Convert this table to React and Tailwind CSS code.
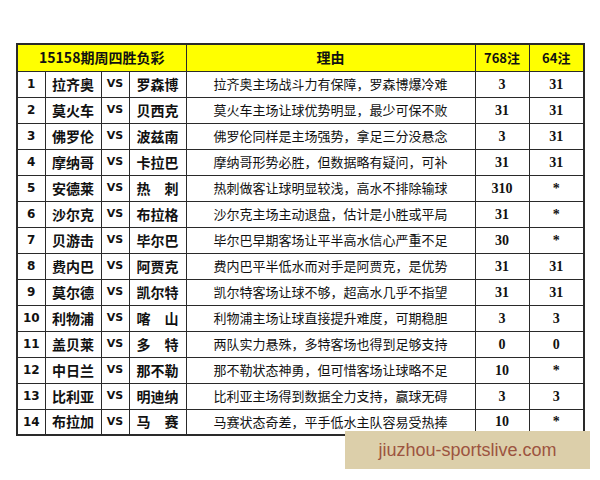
import React from 'react';

const rows = [
  ['1', '拉齐奥', '罗森博', '拉齐奥主场战斗力有保障，罗森博爆冷难', '3', '31'],
  ['2', '莫火车', '贝西克', '莫火车主场让球优势明显，最少可保不败', '31', '31'],
  ['3', '佛罗伦', '波兹南', '佛罗伦同样是主场强势，拿足三分没悬念', '3', '31'],
  ['4', '摩纳哥', '卡拉巴', '摩纳哥形势必胜，但数据略有疑问，可补', '31', '31'],
  ['5', '安德莱', '热　刺', '热刺做客让球明显较浅，高水不排除输球', '310', '*'],
  ['6', '沙尔克', '布拉格', '沙尔克主场主动退盘，估计是小胜或平局', '31', '*'],
  ['7', '贝游击', '毕尔巴', '毕尔巴早期客场让平半高水信心严重不足', '30', '*'],
  ['8', '费内巴', '阿贾克', '费内巴平半低水而对手是阿贾克，是优势', '31', '31'],
  ['9', '莫尔德', '凯尔特', '凯尔特客场让球不够，超高水几乎不指望', '31', '31'],
  ['10', '利物浦', '喀　山', '利物浦主场让球直接提升难度，可期稳胆', '3', '3'],
  ['11', '盖贝莱', '多　特', '两队实力悬殊，多特客场也得到足够支持', '0', '0'],
  ['12', '中日兰', '那不勒', '那不勒状态神勇，但可惜客场让球略不足', '10', '*'],
  ['13', '比利亚', '明迪纳', '比利亚主场得到数据全力支持，赢球无碍', '3', '3'],
  ['14', '布拉加', '马　赛', '马赛状态奇差，平手低水主队容易受热捧', '10', '*'],
];

const cell = 'border border-[#2a2a2a] text-center p-0';
const cjk = "font-['Noto_Sans_CJK_SC',sans-serif]";
const serif = "font-['Liberation_Serif','Noto_Sans_CJK_SC',serif]";
const dejavu = "font-['DejaVu_Sans',sans-serif]";

export default function App() {
  return (
    <div className="relative w-[600px] h-[480px] bg-white pt-[43px] pl-[16px]">
      <table className="border-collapse border-2 border-[#2a2a2a] text-[#111] table-fixed w-[567px]">
        <colgroup>
          <col className="w-[28px]" />
          <col className="w-[56px]" />
          <col className="w-[28px]" />
          <col className="w-[57px]" />
          <col className="w-[289px]" />
          <col className="w-[54px]" />
          <col className="w-[55px]" />
        </colgroup>
        <thead>
          <tr className="h-[27px] bg-[#ffff00]">
            <th colSpan={4} className={`${cell} ${cjk} text-[14px] font-bold`}>15158期周四胜负彩</th>
            <th className={`${cell} ${cjk} text-[14px] font-bold`}>理由</th>
            <th className={`${cell} ${cjk} text-[13px] font-bold`}>768注</th>
            <th className={`${cell} ${cjk} text-[13px] font-bold`}>64注</th>
          </tr>
        </thead>
        <tbody>
          {rows.map((r) => (
            <tr key={r[0]} className="h-[26px]">
              <td className={`${cell} ${dejavu} text-[12px] font-bold`}>{r[0]}</td>
              <td className={`${cell} ${cjk} text-[14px] font-bold`}>{r[1]}</td>
              <td className={`${cell} ${dejavu} text-[11px] font-bold`}>VS</td>
              <td className={`${cell} ${cjk} text-[14px] font-bold`}>{r[2]}</td>
              <td className={`${cell} ${cjk} text-[13px]`}>{r[3]}</td>
              <td className={`${cell} ${serif} text-[14px] font-bold`}>{r[4]}</td>
              <td className={`${cell} ${serif} text-[14px] font-bold`}>{r[5]}</td>
            </tr>
          ))}
        </tbody>
      </table>

      {/* watermark overlay */}
      <div className="absolute left-[345px] top-[431px] w-[245px] h-[38px] bg-[#dccfaa] flex items-center justify-center text-[18px] text-[#9c5440] font-['Liberation_Sans',Arial,sans-serif]">
        jiuzhou-sportslive.com
      </div>
    </div>
  );
}
